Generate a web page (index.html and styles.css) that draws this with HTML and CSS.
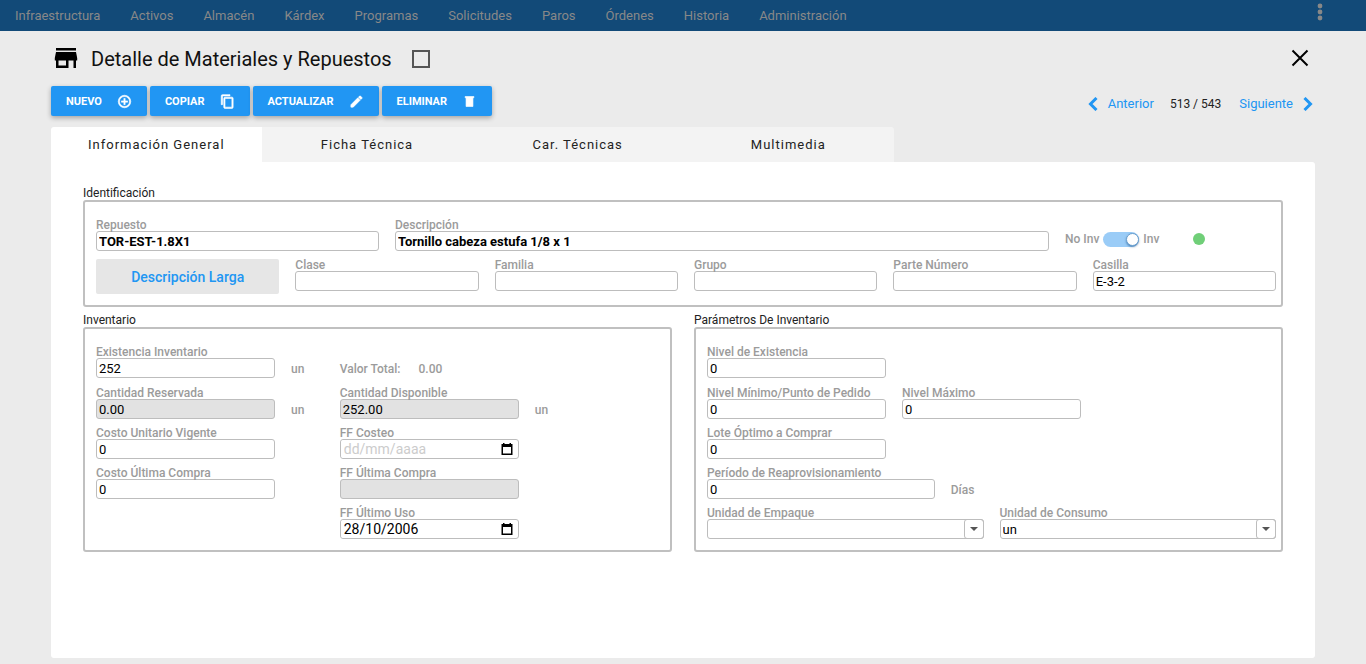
FILE: index.html
```html
<!DOCTYPE html>
<html lang="es">
<head>
    <meta charset="UTF-8">
    <meta name="viewport" content="width=device-width, initial-scale=1">
    <title>Detalle de Materiales y Repuestos</title>
    <link rel="stylesheet" href="styles.css">
</head>

<body>
    <!-- Menú principal -->
    <header class="topbar">
        <nav class="menu">
            <a href="#">Infraestructura</a>
            <a href="#">Activos</a>
            <a href="#">Almacén</a>
            <a href="#">Kárdex</a>
            <a href="#">Programas</a>
            <a href="#">Solicitudes</a>
            <a href="#">Paros</a>
            <a href="#">Órdenes</a>
            <a href="#">Historia</a>
            <a href="#">Administración</a>
        </nav>
        <button type="button" class="more" aria-label="Más opciones">
            <svg width="6" height="18" viewBox="0 0 6 18"><circle cx="3" cy="3" r="2.4"/><circle cx="3" cy="9" r="2.4"/><circle cx="3" cy="15" r="2.4"/></svg>
        </button>
    </header>

    <main class="page">
        <!-- Título -->
        <div class="heading">
            <svg class="store" width="24" height="24" viewBox="0 0 24 24"><path d="M2 1h20v2.500H2zM2 5h20l1.200 6v2.500H22V21h-2.500v-7.500h-5V21H2v-7.500H.8V11zM4.500 13.500v5h7.500v-5z"/></svg>
            <h1>Detalle de Materiales y Repuestos</h1>
            <input type="checkbox" class="mark" aria-label="Seleccionar repuesto">
            <button type="button" class="close" aria-label="Cerrar">
                <svg width="18" height="20" viewBox="0 0 18 20"><path d="M1.500 1.500l15 15M16.500 1.500l-15 15"/></svg>
            </button>
        </div>

        <!-- Acciones y paginador -->
        <div class="toolbar">
            <div class="actions">
                <button type="button" class="btn">NUEVO
                    <svg viewBox="0 0 24 24"><path d="M13 7h-2v4H7v2h4v4h2v-4h4v-2h-4zM12 2a10 10 0 1 0 0 20 10 10 0 0 0 0-20zm0 18a8 8 0 1 1 0-16 8 8 0 0 1 0 16z"/></svg>
                </button>
                <button type="button" class="btn">COPIAR
                    <svg viewBox="0 0 24 24"><path d="M16 1H4a2 2 0 0 0-2 2v14h2V3h12zM19 5H8a2 2 0 0 0-2 2v14c0 1.100.9 2 2 2h11a2 2 0 0 0 2-2V7a2 2 0 0 0-2-2zm0 16H8V7h11z"/></svg>
                </button>
                <button type="button" class="btn">ACTUALIZAR
                    <svg viewBox="0 0 24 24"><path d="M3 17.250V21h3.750L17.810 9.940l-3.750-3.750zM20.710 7.040a1 1 0 0 0 0-1.410l-2.340-2.340a1 1 0 0 0-1.410 0l-1.830 1.830 3.750 3.750z"/></svg>
                </button>
                <button type="button" class="btn">ELIMINAR
                    <svg viewBox="0 0 24 24"><path d="M5 4h14v2h-1.500v14h-11V6H5z"/></svg>
                </button>
            </div>
            <div class="pager">
                <a href="#"><svg width="10" height="14" viewBox="0 0 10 14"><path d="M8.500 1L2.500 7l6 6"/></svg>Anterior</a>
                <span class="count">513 / 543</span>
                <a href="#">Siguiente<svg width="10" height="14" viewBox="0 0 10 14"><path d="M1.500 1l6 6-6 6"/></svg></a>
            </div>
        </div>

        <!-- Pestañas -->
        <div class="tabs" role="tablist">
            <button type="button" class="tab active" role="tab" aria-selected="true">Información General</button>
            <button type="button" class="tab" role="tab" aria-selected="false">Ficha Técnica</button>
            <button type="button" class="tab" role="tab" aria-selected="false">Car. Técnicas</button>
            <button type="button" class="tab" role="tab" aria-selected="false">Multimedia</button>
        </div>

        <form class="panel">
            <!-- Identificación -->
            <section class="group">
                <h2>Identificación</h2>
                <div class="box ident">
                    <div class="ident-main">
                        <div class="field">
                            <label for="repuesto">Repuesto</label>
                            <input type="text" id="repuesto" class="strong" value="TOR-EST-1.8X1">
                        </div>
                        <div class="field">
                            <label for="descripcion">Descripción</label>
                            <input type="text" id="descripcion" class="strong" value="Tornillo cabeza estufa 1/8 x 1">
                        </div>
                        <div class="state">
                            <label class="toggle">No Inv <input type="checkbox" class="switch" checked> Inv</label>
                            <span class="dot"></span>
                        </div>
                    </div>
                    <div class="ident-more">
                        <button type="button" class="long-desc">Descripción Larga</button>
                        <div class="field">
                            <label for="clase">Clase</label>
                            <input type="text" id="clase">
                        </div>
                        <div class="field">
                            <label for="familia">Familia</label>
                            <input type="text" id="familia">
                        </div>
                        <div class="field">
                            <label for="grupo">Grupo</label>
                            <input type="text" id="grupo">
                        </div>
                        <div class="field">
                            <label for="parte">Parte Número</label>
                            <input type="text" id="parte">
                        </div>
                        <div class="field">
                            <label for="casilla">Casilla</label>
                            <input type="text" id="casilla" value="E-3-2">
                        </div>
                    </div>
                </div>
            </section>

            <div class="columns">
                <!-- Inventario -->
                <section class="group">
                    <h2>Inventario</h2>
                    <div class="box fields">
                        <div class="field w4">
                            <label for="existencia">Existencia Inventario</label>
                            <input type="text" id="existencia" value="252">
                        </div>
                        <span class="note w1">un</span>
                        <div class="note total w7"><span>Valor Total:</span><span>0.00</span></div>

                        <div class="field w4 start">
                            <label for="reservada">Cantidad Reservada</label>
                            <input type="text" id="reservada" value="0.00" readonly>
                        </div>
                        <span class="note w1">un</span>
                        <div class="field w4">
                            <label for="disponible">Cantidad Disponible</label>
                            <input type="text" id="disponible" value="252.00" readonly>
                        </div>
                        <span class="note w1">un</span>

                        <div class="field w4 start">
                            <label for="unitario">Costo Unitario Vigente</label>
                            <input type="text" id="unitario" value="0">
                        </div>
                        <div class="field w4 second">
                            <label for="costeo">FF Costeo</label>
                            <div class="date">
                                <input type="text" id="costeo" placeholder="dd/mm/aaaa">
                                <button type="button" aria-label="Elegir fecha"><svg width="12" height="12" viewBox="0 0 12 12"><path d="M2 0h1.500v1h5V0H10v1h1.500v11H.5V1H2zM2 4v6.500h8V4z"/></svg></button>
                            </div>
                        </div>

                        <div class="field w4 start">
                            <label for="ultima">Costo Última Compra</label>
                            <input type="text" id="ultima" value="0">
                        </div>
                        <div class="field w4 second">
                            <label for="ffcompra">FF Última Compra</label>
                            <input type="text" id="ffcompra" readonly>
                        </div>

                        <div class="field w4 second">
                            <label for="ffuso">FF Último Uso</label>
                            <div class="date">
                                <input type="text" id="ffuso" value="28/10/2006" placeholder="dd/mm/aaaa">
                                <button type="button" aria-label="Elegir fecha"><svg width="12" height="12" viewBox="0 0 12 12"><path d="M2 0h1.500v1h5V0H10v1h1.500v11H.5V1H2zM2 4v6.500h8V4z"/></svg></button>
                            </div>
                        </div>
                    </div>
                </section>

                <!-- Parámetros -->
                <section class="group">
                    <h2>Parámetros De Inventario</h2>
                    <div class="box fields">
                        <div class="field w4">
                            <label for="nivel">Nivel de Existencia</label>
                            <input type="text" id="nivel" value="0">
                        </div>

                        <div class="field w4 start">
                            <label for="minimo">Nivel Mínimo/Punto de Pedido</label>
                            <input type="text" id="minimo" value="0">
                        </div>
                        <div class="field w4">
                            <label for="maximo">Nivel Máximo</label>
                            <input type="text" id="maximo" value="0">
                        </div>

                        <div class="field w4 start">
                            <label for="lote">Lote Óptimo a Comprar</label>
                            <input type="text" id="lote" value="0">
                        </div>

                        <div class="field w5 start">
                            <label for="periodo">Período de Reaprovisionamiento</label>
                            <input type="text" id="periodo" value="0">
                        </div>
                        <span class="note w4">Días</span>

                        <div class="field w6 start">
                            <label for="empaque">Unidad de Empaque</label>
                            <div class="combo">
                                <select id="empaque"><option></option><option>un</option></select>
                            </div>
                        </div>
                        <div class="field w6">
                            <label for="consumo">Unidad de Consumo</label>
                            <div class="combo">
                                <select id="consumo"><option>un</option></select>
                            </div>
                        </div>
                    </div>
                </section>
            </div>
        </form>
    </main>
</body>
</html>
```
FILE: styles.css
```css
*,
*::before,
*::after {
    box-sizing: border-box;
}

body {
    display: flex;
    flex-direction: column;
    min-height: 100vh;
    margin: 0;
    background: #ebebeb;
    color: #222;
    font-family: Roboto, "Liberation Sans", sans-serif;
    font-size: 13px;
}

button,
input,
select {
    margin: 0;
    font-family: inherit;
}

button {
    padding: 0;
    border: 0;
    background: none;
    cursor: pointer;
}

a {
    text-decoration: none;
}

/* Barra superior */
.topbar {
    display: flex;
    justify-content: space-between;
    align-items: center;
    height: 31px;
    padding: 0 43px 0 15px;
    background: #124a78;
}

.menu {
    display: flex;
    gap: 30px;
}

.menu a {
    color: #888;
}

.more {
    display: flex;
    align-self: flex-start;
    padding-top: 3px;
}

.more svg {
    fill: #888;
}

/* Página */
.page {
    flex: 1;
    display: flex;
    flex-direction: column;
    padding: 0 51px 6px;
}

.heading {
    display: flex;
    align-items: center;
    height: 55px;
    padding: 0 6px 0 3px;
}

.heading h1 {
    margin: 0 20px 0 13px;
    color: #111;
    font-size: 20px;
    font-weight: 400;
}

.mark {
    appearance: none;
    width: 18px;
    height: 18px;
    border: 2px solid #555;
}

.close {
    display: flex;
    margin-left: auto;
}

.close svg {
    fill: none;
    stroke: #000;
    stroke-width: 2;
}

/* Acciones */
.toolbar {
    display: flex;
    justify-content: space-between;
    align-items: center;
    height: 30px;
    margin-bottom: 11px;
}

.actions {
    display: flex;
    gap: 3px;
}

.btn {
    display: flex;
    align-items: center;
    gap: 15px;
    height: 30px;
    padding: 0 15px;
    border-radius: 2px;
    background: #2196f3;
    box-shadow: 0 2px 5px rgba(0, 0, 0, .3);
    color: #fff;
    font-size: 11px;
    font-weight: 700;
}

.btn svg {
    width: 15px;
    height: 15px;
    fill: #fff;
    stroke: #fff;
    stroke-width: 1;
}

.pager {
    display: flex;
    align-items: center;
    gap: 16px;
    padding: 5px 2px 0 0;
}

.pager a {
    display: flex;
    align-items: center;
    gap: 10px;
    color: #2196f3;
}

.pager svg {
    fill: none;
    stroke: #2196f3;
    stroke-width: 3;
}

.count {
    padding-right: 2px;
    font-size: 12px;
}

/* Pestañas */
.tabs {
    display: grid;
    grid-template-columns: repeat(6, 1fr);
}

.tab {
    height: 35px;
    background: #f3f3f3;
    color: #222;
    font-size: 13px;
    letter-spacing: 1px;
}

.tab.active {
    border-radius: 3px 0 0 0;
    background: #fff;
}

.tab:last-child {
    border-radius: 0 3px 0 0;
}

/* Contenido */
.panel {
    flex: 1;
    padding: 24px 32px;
    border-radius: 0 3px 3px 3px;
    background: #fff;
}

.group h2 {
    margin: 0;
    font-size: 12px;
    font-weight: 400;
    line-height: 14px;
}

.box {
    border: 2px solid #c0c0c0;
    border-radius: 3px;
}

.columns {
    display: grid;
    grid-template-columns: 1fr 1fr;
    gap: 22px;
    margin-top: 6px;
}

/* Campos */
.field {
    min-width: 0;
}

.field label,
.note,
.toggle {
    color: #9b9b9b;
    font-size: 12px;
    font-weight: 500;
    line-height: 16px;
}

.field label {
    display: block;
    height: 14px;
    white-space: nowrap;
}

.field input,
.field select {
    display: block;
    width: 100%;
    height: 20px;
    padding: 0 2px;
    border: 1px solid #bdbdbd;
    border-radius: 3px;
    background: #fff;
    color: #000;
    font-size: 13px;
}

.field input[readonly] {
    background: #e2e2e2;
}

.field .strong {
    font-weight: 700;
}

.field ::placeholder {
    color: #ccc;
}

/* Identificación */
.ident {
    padding: 15px 5px 11px 11px;
}

.ident-main {
    display: grid;
    grid-template-columns: 283fr 654fr 211fr;
    gap: 16px;
    margin-bottom: 6px;
}

.ident-more {
    display: grid;
    grid-template-columns: repeat(6, 1fr);
    align-items: start;
    gap: 16px;
}

.long-desc {
    height: 35px;
    margin-top: 2px;
    border-radius: 2px;
    background: #e6e6e6;
    color: #2196f3;
    font-size: 14px;
    font-weight: 500;
}

.state {
    display: flex;
    align-items: center;
    gap: 34px;
    padding-top: 10px;
}

.toggle {
    display: flex;
    align-items: center;
    gap: 4px;
}

.switch {
    appearance: none;
    display: flex;
    justify-content: flex-end;
    align-items: center;
    width: 36px;
    height: 15px;
    border-radius: 8px;
    background: #9accf7;
}

.switch::before {
    content: "";
    width: 13px;
    height: 13px;
    border: 1px solid #6aa0d0;
    border-radius: 50%;
    background: #fff;
    box-shadow: 0 1px 2px rgba(0, 60, 120, .5);
}

.switch:not(:checked) {
    justify-content: flex-start;
}

.dot {
    width: 12px;
    height: 12px;
    border-radius: 50%;
    background: #70cf78;
}

/* Rejilla de 12 columnas */
.fields {
    display: grid;
    grid-template-columns: repeat(12, 1fr);
    grid-template-rows: 35px repeat(4, 34px);
    gap: 6px 16px;
    padding: 15px 5px 11px 11px;
}

.w1 { grid-column-end: span 1; }
.w4 { grid-column-end: span 4; }
.w5 { grid-column-end: span 5; }
.w6 { grid-column-end: span 6; }
.w7 { grid-column-end: span 7; }

.start { grid-column-start: 1; }
.second { grid-column-start: 6; }

.note {
    padding-top: 17px;
}

.total {
    display: flex;
    gap: 18px;
}

.date {
    display: flex;
    align-items: center;
    border: 1px solid #bdbdbd;
    border-radius: 3px;
}

.field .date input {
    flex: 1;
    min-width: 0;
    height: 18px;
    padding: 0 3px;
    border: 0;
    font-size: 14px;
}

.date button {
    display: flex;
    padding: 0 5px;
}

.combo {
    position: relative;
}

.field select {
    appearance: none;
    padding-right: 20px;
}

/* Flecha del desplegable */
.combo::before {
    content: "";
    position: absolute;
    top: 0;
    right: 0;
    width: 20px;
    height: 20px;
    border: 1px solid #bdbdbd;
    border-radius: 3px;
    pointer-events: none;
}

.combo::after {
    content: "";
    position: absolute;
    top: 8px;
    right: 6px;
    border: 4px solid transparent;
    border-top-color: #555;
    border-bottom: 0;
    pointer-events: none;
}
```
